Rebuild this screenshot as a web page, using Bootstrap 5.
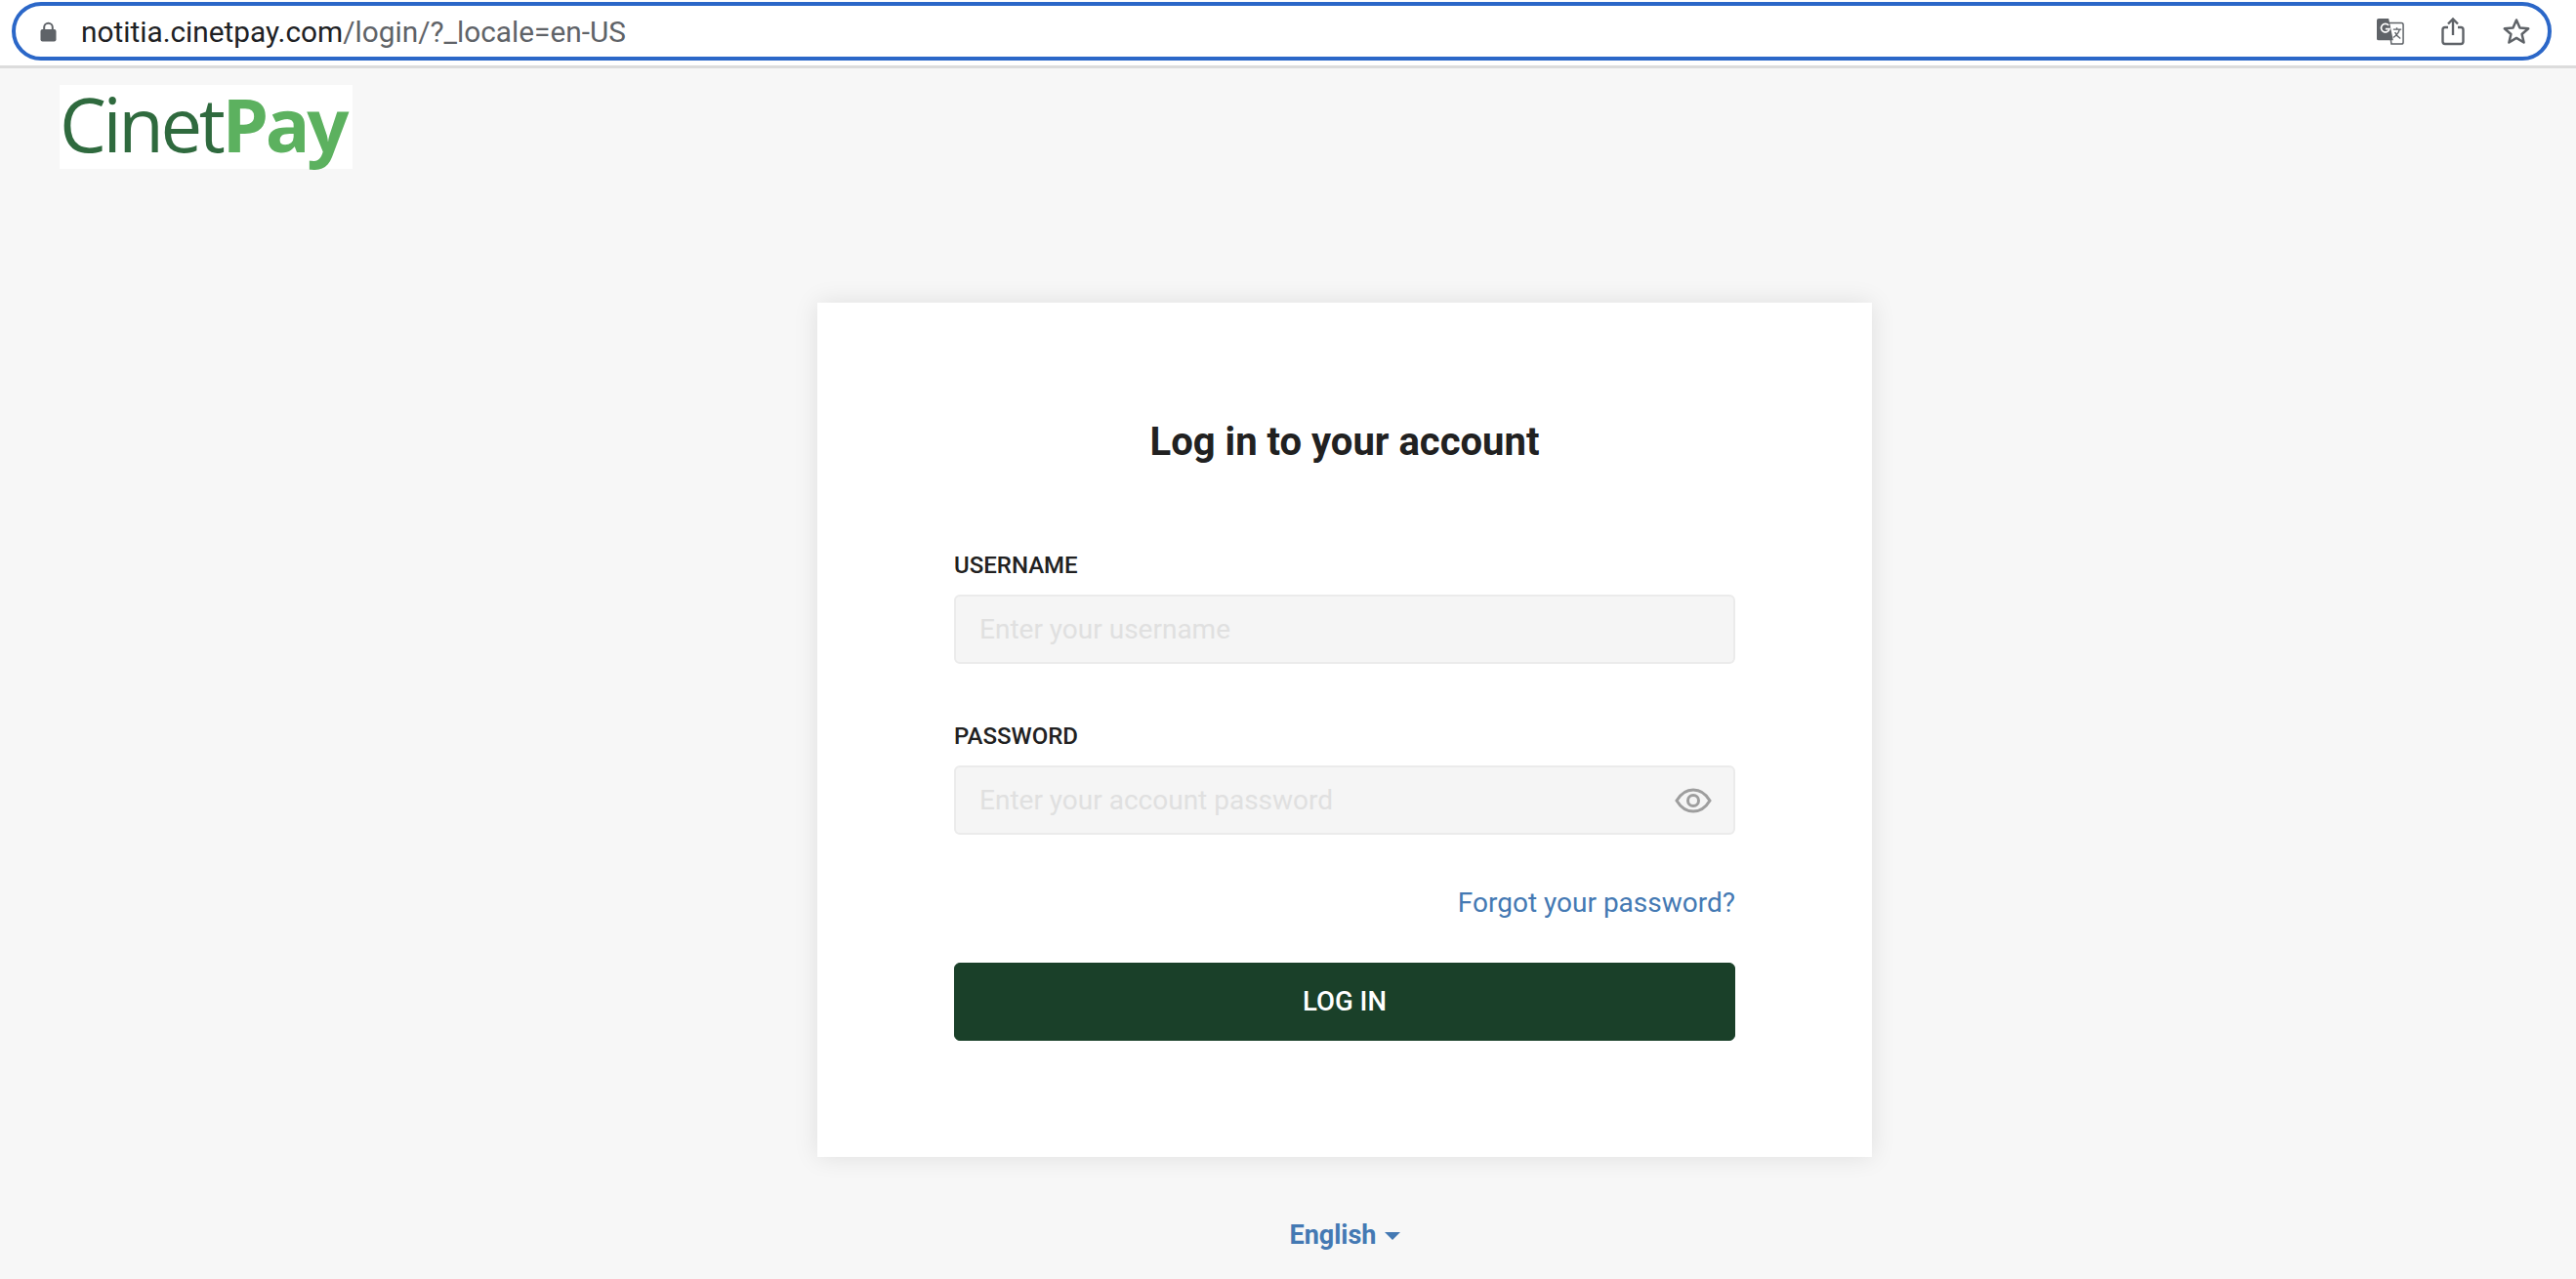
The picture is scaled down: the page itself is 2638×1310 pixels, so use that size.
<!DOCTYPE html>
<html lang="en">
<head>
<meta charset="utf-8">
<title>Log in to your account</title>
<link rel="stylesheet" href="https://cdn.jsdelivr.net/npm/bootstrap@5.3.0/dist/css/bootstrap.min.css">
<style>
html,body{height:100%;}
body{background:#f7f7f7;font-family:Roboto,"Liberation Sans",sans-serif;color:#212121;overflow:hidden;}
.top-strip{height:70px;background:#fff;border-bottom:3px solid #dcdcdc;padding:2px 25px 0 12px;}
.url-pill{height:60px;border:4px solid #2b67c8;border-radius:30px;padding:0 17px 0 25px;background:#fff;}
.url-text{font-size:29.8px;line-height:34px;color:#5f6368;margin-left:25px;padding-top:2px;}
.url-text b{font-weight:400;color:#202124;}
.tool-icons{gap:38px;}
.logo-box{width:300px;height:86px;margin:17px 0 0 61px;background:#fff;}
.logo-word{font-family:"Open Sans","Noto Sans",sans-serif;font-size:76px;line-height:79px;letter-spacing:-3.4px;color:#2f6a3e;filter:blur(.7px);white-space:nowrap;}
.logo-word b{color:#5cb15f;font-weight:700;}
.login-wrap{width:1080px;margin:137px 0 0 837px;}
.login-panel{border:0;border-radius:0;box-shadow:0 0 24px rgba(0,0,0,.1);padding:121px 140px 120px;height:875px;}
.login-title{font-size:40px;line-height:43px;font-weight:700;text-align:center;color:#212121;margin:0 0 90px;}
.field-label{display:block;font-size:24px;line-height:30px;font-weight:500;color:#212121;margin:0 0 15px;}
.field-input{height:71px;background:#f5f5f5;border:2px solid #ebebeb;border-radius:6px;font-size:28px;padding:0 24px;color:#212121;}
.field-input::placeholder{color:#e0e0e0;opacity:1;}
.field-gap{margin-bottom:59px;}
.eye-btn{right:24px;top:50%;transform:translateY(-50%);line-height:0;}
.forgot-row{margin:52px 0 39px;line-height:36px;}
.forgot-link{font-size:28px;color:#4479b3;text-decoration:none;}
.login-btn{height:80px;background:#1a4029;border-color:#1a4029;color:#fff;font-size:27.5px;font-weight:500;border-radius:6px;}
.lang-link{font-size:27px;line-height:36px;font-weight:700;color:#4479b3;text-decoration:none;margin-top:62px;}
.lang-link.dropdown-toggle::after{border-top-width:.32em;border-right-width:.32em;border-left-width:.32em;vertical-align:.16em;margin-left:.3em;}
</style>
</head>
<body>
<div class="top-strip">
  <div class="url-pill d-flex align-items-center">
    <svg width="17" height="21" viewBox="0 0 17 21"><path d="M4.2 9V6a4.3 4.3 0 0 1 8.6 0v3" fill="none" stroke="#5f6368" stroke-width="2"/><rect x="0.5" y="8" width="16" height="12.5" rx="2" fill="#5f6368"/></svg>
    <div class="url-text flex-grow-1"><b>notitia.cinetpay.com</b>/login/?_locale=en-US</div>
    <div class="tool-icons d-flex align-items-center">
      <svg width="28" height="30" viewBox="0 0 30 30"><path d="M13 6h14a2 2 0 0 1 2 2v19a2 2 0 0 1-2 2H16z" fill="#fff" stroke="#5f6368" stroke-width="1.6"/><path d="M2 1h11l5 24H2a2 2 0 0 1-2-2V3a2 2 0 0 1 2-2z" fill="#5f6368"/><path d="M13 8.500a4.600 4.600 0 1 0 .9 4H9.500" fill="none" stroke="#fff" stroke-width="1.800"/><path d="M18 13h9M22 11v2M25 13c-1 4-4 7-7 9M20 16c1 3 3 5 6 7" fill="none" stroke="#5f6368" stroke-width="1.500"/></svg>
      <svg width="24" height="30" viewBox="0 0 24 30"><path d="M7 11H4a2.500 2.500 0 0 0-2.500 2.500v12A2.500 2.500 0 0 0 4 28h16a2.500 2.500 0 0 0 2.500-2.500v-12A2.500 2.500 0 0 0 20 11h-3" fill="none" stroke="#5f6368" stroke-width="2.400"/><path d="M12 19V3M7 7.500l5-5 5 5" fill="none" stroke="#5f6368" stroke-width="2.400"/></svg>
      <svg width="30" height="30" viewBox="0 0 30 30"><path d="M15 3.500l3.500 8 8.700.8-6.600 5.700 2 8.500L15 21.900l-7.600 4.600 2-8.500-6.600-5.700 8.700-.8z" fill="none" stroke="#5f6368" stroke-width="2.500" stroke-linejoin="round"/></svg>
    </div>
  </div>
</div>
<div class="logo-box"><div class="logo-word">Cinet<b>Pay</b></div></div>
<main class="login-wrap d-flex flex-column align-items-center">
  <div class="card login-panel w-100">
    <h1 class="login-title">Log in to your account</h1>
    <form>
      <div class="field-gap">
        <label class="field-label" for="u">USERNAME</label>
        <input id="u" class="form-control field-input" type="text" placeholder="Enter your username">
      </div>
      <div>
        <label class="field-label" for="p">PASSWORD</label>
        <div class="position-relative">
          <input id="p" class="form-control field-input" type="password" placeholder="Enter your account password">
          <span class="eye-btn position-absolute"><svg width="38" height="26" viewBox="0 0 38 26"><path d="M2 13C6.500 5.500 12 2 19 2s12.500 3.500 17 11c-4.500 7.500-10 11-17 11S6.500 20.500 2 13z" fill="none" stroke="#9e9e9e" stroke-width="3"/><circle cx="19" cy="13" r="5.500" fill="none" stroke="#9e9e9e" stroke-width="3"/></svg></span>
        </div>
      </div>
      <div class="forgot-row text-end"><a class="forgot-link" href="#">Forgot your password?</a></div>
      <button type="button" class="btn login-btn w-100">LOG IN</button>
    </form>
  </div>
  <a class="lang-link dropdown-toggle" href="#">English</a>
</main>
<script src="https://cdn.jsdelivr.net/npm/bootstrap@5.3.0/dist/js/bootstrap.bundle.min.js"></script>
</body>
</html>
